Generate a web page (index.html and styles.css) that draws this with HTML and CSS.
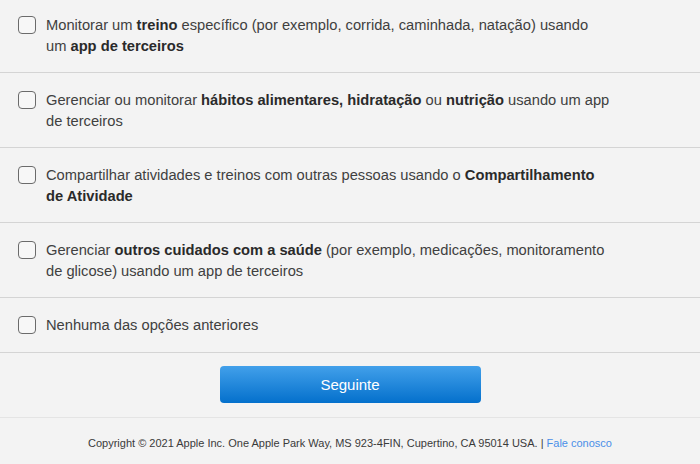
FILE: index.html
```html
<!DOCTYPE html>
<html lang="pt-BR">
<head>
<meta charset="utf-8">
<link rel="stylesheet" href="styles.css">
</head>
<body>
<main class="page">
  <ul class="options">
    <li class="option">
      <span class="box"></span>
      <p class="label">Monitorar um <b>treino</b> específico (por exemplo, corrida, caminhada, natação) usando um <b>app de terceiros</b></p>
    </li>
    <li class="option">
      <span class="box"></span>
      <p class="label">Gerenciar ou monitorar <b>hábitos alimentares, hidratação</b> ou <b>nutrição</b> usando um app de terceiros</p>
    </li>
    <li class="option">
      <span class="box"></span>
      <p class="label">Compartilhar atividades e treinos com outras pessoas usando o <b>Compartilhamento de Atividade</b></p>
    </li>
    <li class="option">
      <span class="box"></span>
      <p class="label">Gerenciar <b>outros cuidados com a saúde</b> (por exemplo, medicações, monitoramento de glicose) usando um app de terceiros</p>
    </li>
    <li class="option single">
      <span class="box"></span>
      <p class="label">Nenhuma das opções anteriores</p>
    </li>
  </ul>
  <div class="actions">
    <button class="next" type="button">Seguinte</button>
  </div>
  <footer class="footer">
    Copyright © 2021 Apple Inc. One Apple Park Way, MS 923-4FIN, Cupertino, CA 95014 USA. | <a href="#">Fale conosco</a>
  </footer>
</main>
</body>
</html>
```
FILE: styles.css
```css
* { box-sizing: border-box; }
html, body {
  margin: 0;
  padding: 0;
  background: #f3f3f3;
}
body {
  font-family: "Liberation Sans", Arial, sans-serif;
  color: #404040;
  overflow: hidden;
}
.page {
  margin-top: -2px;
}
.options {
  list-style: none;
  margin: 0;
  padding: 0;
}
.option {
  display: flex;
  align-items: flex-start;
  gap: 10px;
  padding: 17px 0 15px 18px;
  border-bottom: 1px solid #d4d4d4;
}
.option.single {
  padding-bottom: 16px;
}
.box {
  flex: none;
  width: 18px;
  height: 18px;
  margin-top: 1px;
  border: 1.5px solid #6b6b6b;
  border-radius: 4px;
  background: #f7f7f7;
}
.label {
  margin: 0;
  width: 566px;
  font-size: 14.7px;
  line-height: 21px;
}
.label b {
  color: #2a2a2a;
}
.actions {
  display: flex;
  justify-content: center;
  padding: 13px 0 14px;
  border-bottom: 1px solid #e4e4e4;
}
.next {
  width: 261px;
  height: 37px;
  border: none;
  border-radius: 4px;
  background: linear-gradient(#42a0ea, #0470cc);
  color: #fff;
  font-family: "Liberation Sans", Arial, sans-serif;
  font-size: 15px;
  padding: 0;
}
.footer {
  text-align: center;
  font-size: 11px;
  line-height: 14px;
  padding-top: 18px;
  color: #3a3a3a;
}
.footer a {
  color: #4a8fe8;
  text-decoration: none;
}
```
